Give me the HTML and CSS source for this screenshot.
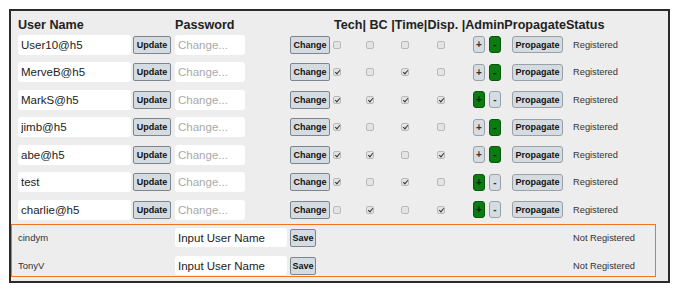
FILE: index.html
```html
<!DOCTYPE html>
<html lang="en">
<head>
    <meta charset="UTF-8">
    <title>User Accounts</title>
    <link rel="stylesheet" href="styles.css">
</head>
<body>
    <div class="panel">
        <div class="head">
            <span class="h-user">User Name</span>
            <span class="h-pass">Password</span>
            <span>Tech| BC |Time|Disp. |AdminPropagateStatus</span>
        </div>

        <div class="row">
            <input class="field user" type="text" value="User10@h5">
            <button class="btn update">Update</button>
            <input class="field pass" type="password" placeholder="Change...">
            <button class="btn change">Change</button>
            <span class="cb tech"></span>
            <span class="cb bc"></span>
            <span class="cb time"></span>
            <span class="cb disp"></span>
            <button class="adm plus">+</button>
            <button class="adm minus on">-</button>
            <button class="btn propagate">Propagate</button>
            <span class="status">Registered</span>
        </div>

        <div class="row">
            <input class="field user" type="text" value="MerveB@h5">
            <button class="btn update">Update</button>
            <input class="field pass" type="password" placeholder="Change...">
            <button class="btn change">Change</button>
            <span class="cb tech on"></span>
            <span class="cb bc"></span>
            <span class="cb time on"></span>
            <span class="cb disp"></span>
            <button class="adm plus">+</button>
            <button class="adm minus on">-</button>
            <button class="btn propagate">Propagate</button>
            <span class="status">Registered</span>
        </div>

        <div class="row">
            <input class="field user" type="text" value="MarkS@h5">
            <button class="btn update">Update</button>
            <input class="field pass" type="password" placeholder="Change...">
            <button class="btn change">Change</button>
            <span class="cb tech on"></span>
            <span class="cb bc on"></span>
            <span class="cb time on"></span>
            <span class="cb disp on"></span>
            <button class="adm plus on">+</button>
            <button class="adm minus">-</button>
            <button class="btn propagate">Propagate</button>
            <span class="status">Registered</span>
        </div>

        <div class="row">
            <input class="field user" type="text" value="jimb@h5">
            <button class="btn update">Update</button>
            <input class="field pass" type="password" placeholder="Change...">
            <button class="btn change">Change</button>
            <span class="cb tech on"></span>
            <span class="cb bc"></span>
            <span class="cb time on"></span>
            <span class="cb disp"></span>
            <button class="adm plus">+</button>
            <button class="adm minus on">-</button>
            <button class="btn propagate">Propagate</button>
            <span class="status">Registered</span>
        </div>

        <div class="row">
            <input class="field user" type="text" value="abe@h5">
            <button class="btn update">Update</button>
            <input class="field pass" type="password" placeholder="Change...">
            <button class="btn change">Change</button>
            <span class="cb tech on"></span>
            <span class="cb bc on"></span>
            <span class="cb time"></span>
            <span class="cb disp on"></span>
            <button class="adm plus">+</button>
            <button class="adm minus on">-</button>
            <button class="btn propagate">Propagate</button>
            <span class="status">Registered</span>
        </div>

        <div class="row">
            <input class="field user" type="text" value="test">
            <button class="btn update">Update</button>
            <input class="field pass" type="password" placeholder="Change...">
            <button class="btn change">Change</button>
            <span class="cb tech on"></span>
            <span class="cb bc"></span>
            <span class="cb time on"></span>
            <span class="cb disp"></span>
            <button class="adm plus on">+</button>
            <button class="adm minus">-</button>
            <button class="btn propagate">Propagate</button>
            <span class="status">Registered</span>
        </div>

        <div class="row">
            <input class="field user" type="text" value="charlie@h5">
            <button class="btn update">Update</button>
            <input class="field pass" type="password" placeholder="Change...">
            <button class="btn change">Change</button>
            <span class="cb tech"></span>
            <span class="cb bc on"></span>
            <span class="cb time"></span>
            <span class="cb disp on"></span>
            <button class="adm plus on">+</button>
            <button class="adm minus">-</button>
            <button class="btn propagate">Propagate</button>
            <span class="status">Registered</span>
        </div>

        <div class="pending">
            <div class="p-row">
                <span class="p-name">cindym</span>
                <input class="field p-input" type="text" value="Input User Name">
                <button class="btn save">Save</button>
                <span class="status p-status">Not Registered</span>
            </div>
            <div class="p-row">
                <span class="p-name">TonyV</span>
                <input class="field p-input" type="text" value="Input User Name">
                <button class="btn save">Save</button>
                <span class="status p-status">Not Registered</span>
            </div>
        </div>
    </div>
</body>
</html>
```

FILE: styles.css
```css
* {
    margin: 0;
    padding: 0;
    box-sizing: border-box;
}

body {
    background: #fff;
    font-family: "Liberation Sans", Arial, sans-serif;
    color: #222;
}

.panel {
    margin: 9px 0 0 9px;
    width: 661px;
    height: 274px;
    border: 2px solid #2b2b2b;
    background: #ededed;
}

.head {
    display: flex;
    height: 20px;
    padding: 7px 0 0 7px;
    font-size: 12.6px;
    font-weight: bold;
    line-height: 15px;
    white-space: nowrap;
    color: #222;
}

.h-user {
    width: 157px;
}

.h-pass {
    width: 159px;
}

.row {
    display: flex;
    align-items: center;
    height: 27.5px;
    padding-left: 7px;
}

.field {
    height: 20px;
    border: none;
    border-radius: 3px;
    background: #fff;
    font-family: "Liberation Sans", Arial, sans-serif;
    font-size: 11.5px;
    padding: 0 3px;
    color: #222;
    outline: none;
}

.field::placeholder {
    color: #a9a9a9;
}

.user {
    width: 113px;
}

.pass {
    width: 70px;
    margin-left: 4px;
}

.btn {
    height: 18px;
    border: 1px solid #7d868e;
    border-radius: 2px;
    background: #d4dce2;
    font-family: "Liberation Sans", Arial, sans-serif;
    font-size: 9px;
    font-weight: bold;
    color: #111;
}

.update {
    width: 38px;
    margin-left: 2px;
}

.change {
    width: 40px;
    margin-left: 45px;
}

.cb {
    position: relative;
    width: 8px;
    height: 8px;
    border: 1px solid #b9b9b9;
    border-radius: 2px;
    background: #e4e4e4;
}

.cb.on::after {
    content: "";
    position: absolute;
    left: 2px;
    top: 0;
    width: 2px;
    height: 4px;
    border: solid #333;
    border-width: 0 1.5px 1.5px 0;
    transform: rotate(40deg);
}

.tech {
    margin-left: 3px;
}

.bc {
    margin-left: 25px;
}

.time {
    margin-left: 27px;
}

.disp {
    margin-left: 28px;
}

.adm {
    width: 12px;
    height: 17px;
    border: 1px solid #98a1a8;
    border-radius: 3px;
    background: #d5dde3;
    font-family: "Liberation Sans", Arial, sans-serif;
    font-size: 10px;
    font-weight: bold;
    color: #333;
}

.adm.on {
    background: #0b7b12;
    border-color: #06580b;
    color: #021f03;
}

.plus {
    margin-left: 28px;
}

.minus {
    margin-left: 4px;
}

.propagate {
    width: 51px;
    height: 17px;
    margin-left: 11px;
    border-color: #98a1a8;
    border-radius: 3px;
}

.status {
    margin-left: 10px;
    font-size: 9.3px;
    color: #333;
}

.pending {
    width: 645px;
    height: 53px;
    margin-top: 0.5px;
    border: 1px solid #f4731f;
    padding: 3px 0 1px 6px;
}

.p-row {
    display: flex;
    align-items: center;
    height: 19px;
}

.p-row + .p-row {
    margin-top: 9px;
}

.p-name {
    width: 157px;
    font-size: 9.5px;
    color: #333;
}

.p-input {
    width: 112px;
    height: 19px;
}

.save {
    width: 26px;
    margin-left: 3px;
}

.p-status {
    margin-left: 257px;
}
```
